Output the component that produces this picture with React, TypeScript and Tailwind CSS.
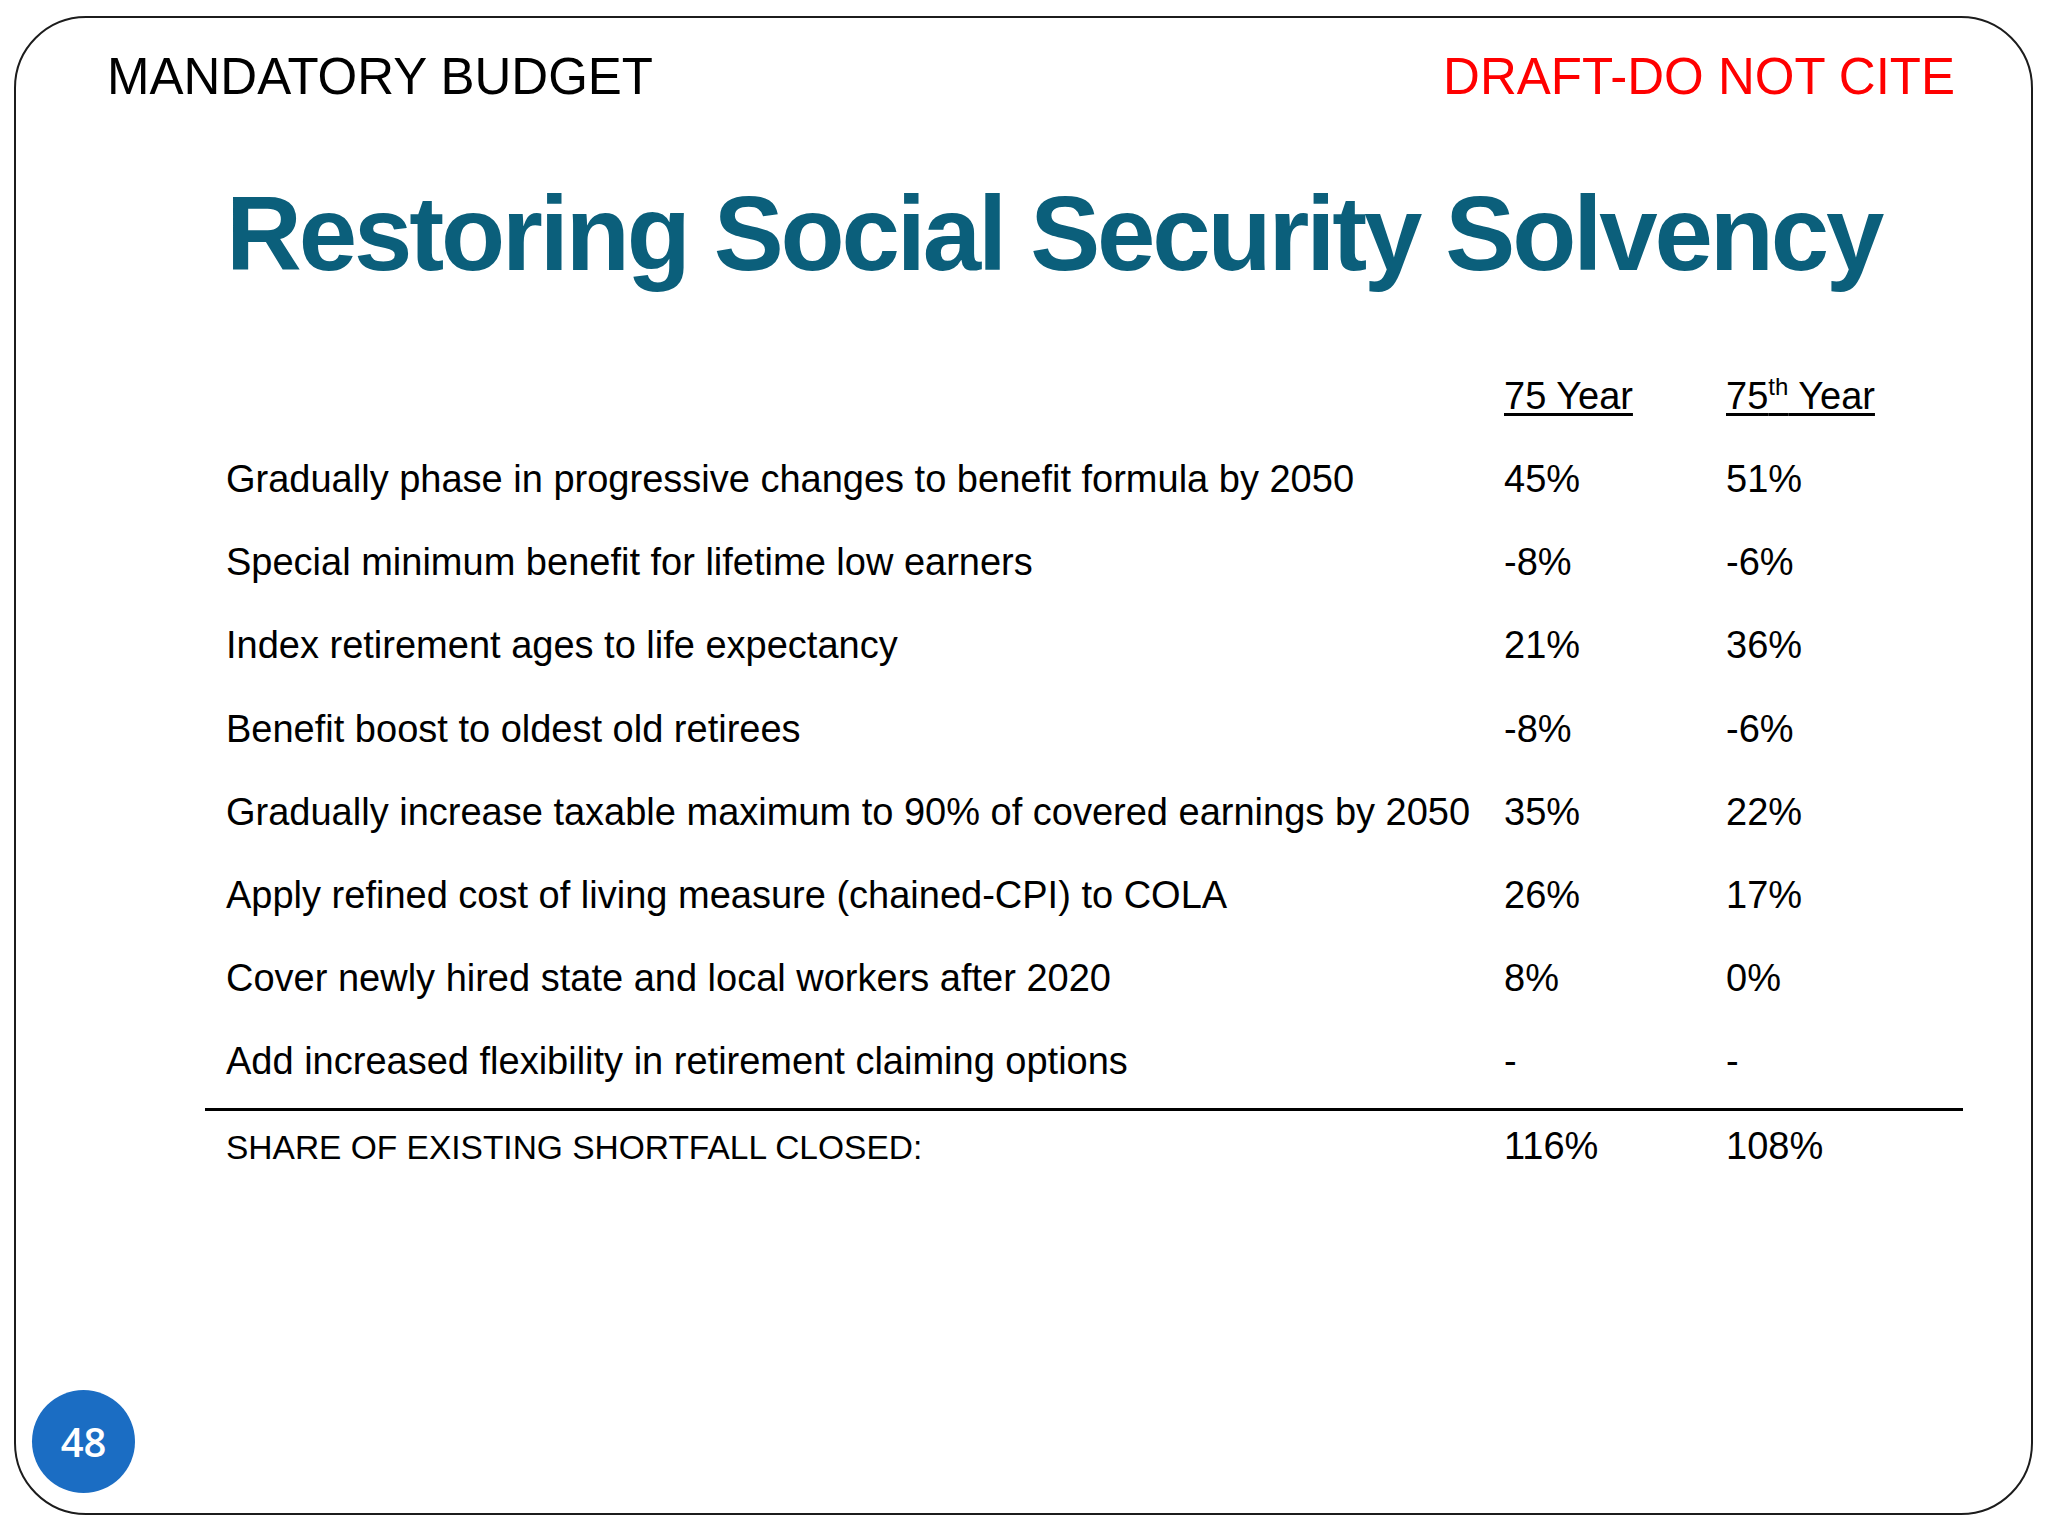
const rows: [string, string, string][] = [
  ["Gradually phase in progressive changes to benefit formula by 2050", "45%", "51%"],
  ["Special minimum benefit for lifetime low earners", "-8%", "-6%"],
  ["Index retirement ages to life expectancy", "21%", "36%"],
  ["Benefit boost to oldest old retirees", "-8%", "-6%"],
  ["Gradually increase taxable maximum to 90% of covered earnings by 2050", "35%", "22%"],
  ["Apply refined cost of living measure (chained-CPI) to COLA", "26%", "17%"],
  ["Cover newly hired state and local workers after 2020", "8%", "0%"],
  ["Add increased flexibility in retirement claiming options", "-", "-"],
]

export default function App() {
  return (
    <div className="w-[2048px] h-[1536px] bg-white pt-[16px] pl-[14px] font-['Liberation_Sans',Arial,sans-serif] text-black">
      <div className="relative w-[2019px] h-[1499px] border-2 border-[#1c1c1c] rounded-[72px]">

        {/* Header strip */}
        <div className="flex justify-between pl-[91px] pr-[76px] pt-[33px] text-[51px] leading-none">
          <span>MANDATORY BUDGET</span>
          <span className="text-[#ff0000]">DRAFT-DO NOT CITE</span>
        </div>

        {/* Title */}
        <h1 className="mt-[79px] pl-[210px] text-[105px] leading-none font-bold tracking-[-0.03em] text-[#0b5f7b] whitespace-nowrap">
          Restoring Social Security Solvency
        </h1>

        {/* Table */}
        <div className="mt-[69px] ml-[189px] w-[1758px] text-[38px]">
          <div className="flex h-[83px] leading-[83px] pl-[21px]">
            <div className="w-[1278px]" />
            <div className="w-[222px]">
              <span className="underline decoration-[3px] underline-offset-[4px]">75 Year</span>
            </div>
            <div>
              <span className="underline decoration-[3px] underline-offset-[4px]">
                75<sup className="text-[24px] -top-[14px]">th</sup> Year
              </span>
            </div>
          </div>

          {rows.map(([label, a, b]) => (
            <div key={label} className="flex h-[83.2px] leading-[83.2px] pl-[21px] whitespace-nowrap">
              <div className="w-[1278px]">{label}</div>
              <div className="w-[222px]">{a}</div>
              <div>{b}</div>
            </div>
          ))}

          <div className="mt-[4px] border-t-[3px] border-black" />

          <div className="flex items-baseline h-[60px] leading-[60px] mt-[5px] pl-[21px]">
            <div className="w-[1278px] text-[33.5px]">SHARE OF EXISTING SHORTFALL CLOSED:</div>
            <div className="w-[222px]">116%</div>
            <div>108%</div>
          </div>
        </div>

        {/* Slide number */}
        <div className="absolute left-[16px] bottom-[20px] w-[103px] h-[103px] rounded-full bg-[#1b6dc3] flex items-center justify-center">
          <span className="text-white text-[40px] font-semibold font-['Open_Sans',sans-serif] leading-none">48</span>
        </div>
      </div>
    </div>
  )
}
